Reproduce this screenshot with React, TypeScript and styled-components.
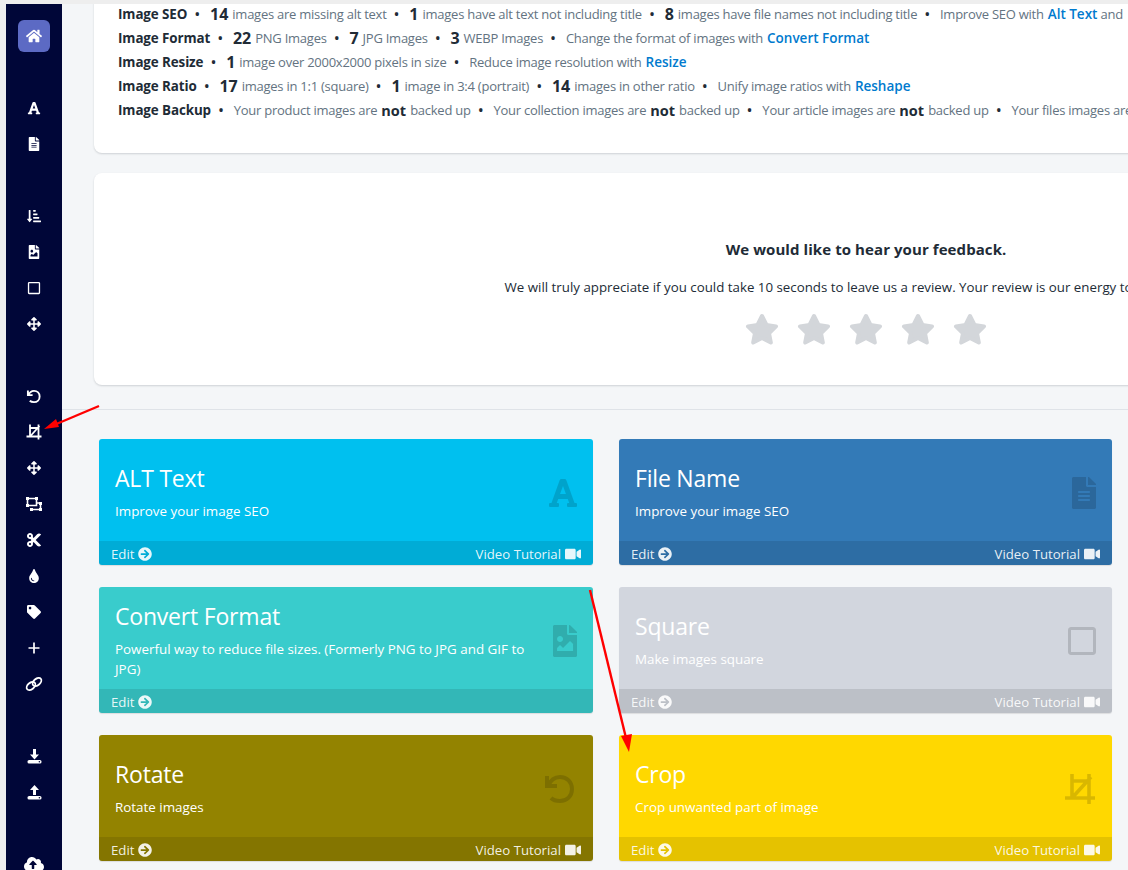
import { ReactNode } from 'react';
import styled, { createGlobalStyle } from 'styled-components';
import {
  FaArrowCircleRight,
  FaArrowsAlt,
  FaCloudUploadAlt,
  FaCut,
  FaFileAlt,
  FaFileImage,
  FaFont,
  FaHome,
  FaRegSquare,
  FaSortAmountDownAlt,
  FaTag,
  FaTint,
  FaVideo,
} from 'react-icons/fa';

const GlobalStyle = createGlobalStyle`
  html, body {
    margin: 0;
    padding: 0;
    background: #eeeeee;
    font-family: "Open Sans", "Liberation Sans", sans-serif;
    color: #212b36;
  }
`;

const Page = styled.div`
  position: relative;
  display: flex;
  width: 1128px;
  height: 870px;
  padding: 4px 0 0 6px;
  box-sizing: border-box;
  overflow: hidden;
`;

const Sidebar = styled.nav`
  flex: 0 0 56px;
  display: flex;
  flex-direction: column;
  align-items: center;
  gap: 36px;
  padding-top: 14px;
  background: #000638;
`;

const SideGroup = styled.div`
  display: flex;
  flex-direction: column;
  align-items: center;
`;

const SideItem = styled.div`
  display: flex;
  align-items: center;
  justify-content: center;
  width: 36px;
  height: 36px;
  color: #fff;
  font-size: 14px;
`;

const HomeButton = styled.div`
  display: flex;
  align-items: center;
  justify-content: center;
  width: 32px;
  height: 32px;
  border-radius: 6px;
  background: #5c6ac4;
  color: #fff;
  font-size: 16px;
`;

const Main = styled.main`
  flex: 1;
  min-width: 0;
  overflow: hidden;
  background: #f4f6f8;
`;

const Panel = styled.section`
  width: 1544px;
  margin-left: 32px;
  background: #fff;
  border-radius: 0 0 8px 8px;
  box-shadow: 0 1px 2px rgba(33, 43, 54, 0.18);
`;

const InfoPanel = styled(Panel)`
  height: 151px;
  margin-top: -2px;
  padding: 0 24px;
  box-sizing: border-box;
`;

const InfoRow = styled.div`
  height: 24px;
  display: flex;
  align-items: center;
  white-space: pre;
  font-size: 13px;
  letter-spacing: -0.25px;
  color: #637381;
`;

const Label = styled.b`
  font-size: 13.4px;
  font-weight: 700;
  letter-spacing: -0.1px;
  color: #212b36;
`;

const Num = styled.b`
  font-size: 16px;
  font-weight: 700;
  letter-spacing: 0;
  color: #212b36;
  margin-right: 4px;
`;

const Strong = styled.b`
  margin: 0 4px;
  font-size: 14.5px;
  font-weight: 700;
  letter-spacing: 0;
  color: #212b36;
`;

const Dot = styled.span`
  margin: 0 10px 0 7px;
  color: #212b36;
  font-size: 16px;
  line-height: 16px;
`;

const ToolLink = styled.a`
  margin-left: 4px;
  font-size: 13.5px;
  font-weight: 600;
  letter-spacing: 0;
  color: #007ace;
`;

const FeedbackPanel = styled(Panel)`
  height: 212px;
  margin-top: 20px;
  border-radius: 8px;
  display: flex;
  flex-direction: column;
  align-items: center;
  padding-top: 66px;
  box-sizing: border-box;
`;

const FeedbackTitle = styled.h2`
  margin: 0;
  font-size: 15px;
  line-height: 20px;
  font-weight: 700;
  letter-spacing: 0.08px;
`;

const FeedbackText = styled.p`
  margin: 18px 0 0;
  font-size: 13.3px;
  line-height: 20px;
  white-space: nowrap;
`;

const Stars = styled.div`
  display: flex;
  gap: 18px;
  margin-top: 16px;
`;

const Divider = styled.hr`
  height: 1px;
  margin: 24px 0 29px;
  border: 0;
  background: #dfe3e8;
`;

const CardGrid = styled.div`
  display: grid;
  grid-template-columns: 494px 493px;
  grid-auto-rows: 126px;
  column-gap: 26px;
  row-gap: 22px;
  margin-left: 37px;
`;

const Card = styled.article<{ $bg: string }>`
  display: flex;
  flex-direction: column;
  border-radius: 3px;
  overflow: hidden;
  background: ${(p) => p.$bg};
  color: #fff;
  box-shadow: 0 1px 1px rgba(0, 0, 0, 0.1);
`;

const CardBody = styled.div`
  flex: 1;
  display: flex;
  align-items: center;
  justify-content: space-between;
  padding: 2px 16px 0;
`;

const CardText = styled.div`
  width: 416px;
`;

const CardTitle = styled.h3`
  margin: 0 0 6px;
  font-size: 23px;
  line-height: 33px;
  font-weight: 400;
  letter-spacing: -0.2px;
`;

const CardDesc = styled.p`
  margin: 0;
  font-size: 13.4px;
  line-height: 20px;
`;

const CardIcon = styled.div<{ $w: number }>`
  display: flex;
  margin-top: 4px;
  color: rgba(0, 0, 0, 0.15);

  svg {
    width: ${(p) => p.$w}px;
    height: 32px;
  }
`;

const CardFooter = styled.div`
  flex: 0 0 24px;
  box-sizing: border-box;
  display: flex;
  align-items: center;
  justify-content: space-between;
  padding: 1px 12px 0;
  background: rgba(0, 0, 0, 0.1);
  font-size: 13.2px;
  color: rgba(255, 255, 255, 0.9);
`;

const FooterLink = styled.span`
  display: flex;
  align-items: center;
  gap: 4px;
`;

const Overlay = styled.svg`
  position: absolute;
  inset: 0;
  pointer-events: none;
`;

const Star = () => (
  <svg width="34" height="32" viewBox="0 0 34 32">
    <polygon
      points="17,3 21.5,12 31,13.4 24,20.2 25.8,29.5 17,25 8.2,29.5 10,20.2 3,13.4 12.5,12"
      fill="#d3d6da"
      stroke="#d3d6da"
      strokeWidth="4"
      strokeLinejoin="round"
    />
  </svg>
);

const CropIcon = () => (
  <svg width="16" height="16" viewBox="0 0 32 32" fill="none" stroke="currentColor" strokeWidth="3.6">
    <path d="M1 25H31M8 1V25M8 8H25M25 1V31M27 4L8 25" />
  </svg>
);

const UndoIcon = () => (
  <svg width="16" height="15" viewBox="0 0 34 32" fill="none" stroke="currentColor" strokeWidth="4">
    <path d="M4 3V13H14M5 13C8 6 12 4 17 4C24 4 29 9 29 16C29 23 24 28 17 28C13 28 10 27 8 25" />
  </svg>
);

const ReshapeIcon = () => (
  <svg width="18" height="16" viewBox="0 0 18 16" fill="none" stroke="currentColor" strokeWidth="1.6">
    <path d="M2.5 2.5H11.5V9.5H2.5ZM6 13.5H15.5V7H11.5" />
    <path
      d="M1 1H4V4H1ZM10 1H13V4H10ZM1 8H4V11H1ZM14 6H17V9H14ZM14 12H17V15H14ZM5 12H8V15H5Z"
      fill="currentColor"
      stroke="none"
    />
  </svg>
);

const PlusIcon = () => (
  <svg width="12" height="12" viewBox="0 0 12 12" fill="none" stroke="currentColor" strokeWidth="1.7">
    <path d="M6 0.5V11.5M0.5 6H11.5" />
  </svg>
);

const LinkIcon = () => (
  <svg width="18" height="16" viewBox="0 0 18 16" fill="none" stroke="currentColor" strokeWidth="1.8">
    <ellipse cx="6" cy="10" rx="5" ry="3.2" transform="rotate(-40 6 10)" />
    <ellipse cx="12" cy="6" rx="5" ry="3.2" transform="rotate(-40 12 6)" />
  </svg>
);

const TrayIcon = ({ up }: { up?: boolean }) => (
  <svg width="15" height="15" viewBox="0 0 15 15" fill="currentColor">
    <path d={up ? 'M7.5 0L12 5H9V10H6V5H3Z' : 'M6 0H9V5.5H12L7.5 10.5L3 5.5H6Z'} />
    <rect x="0.5" y="11" width="14" height="3.6" rx="1.6" />
    <circle cx="12.4" cy="12.8" r="0.8" fill="#000638" />
  </svg>
);

const sideGroups: ReactNode[][] = [
  [<FaFont />, <FaFileAlt />],
  [<FaSortAmountDownAlt />, <FaFileImage />, <FaRegSquare />, <FaArrowsAlt />],
  [
    <UndoIcon />,
    <CropIcon />,
    <FaArrowsAlt />,
    <ReshapeIcon />,
    <FaCut size={16} />,
    <FaTint />,
    <FaTag />,
    <PlusIcon />,
    <LinkIcon />,
  ],
  [<TrayIcon />, <TrayIcon up />],
  [<FaCloudUploadAlt size={20} />],
];

type CardInfo = {
  title: string;
  desc: string;
  bg: string;
  icon: ReactNode;
  iconWidth: number;
  video?: boolean;
};

const cards: CardInfo[] = [
  { title: 'ALT Text', desc: 'Improve your image SEO', bg: '#00c0ef', icon: <FaFont />, iconWidth: 28, video: true },
  { title: 'File Name', desc: 'Improve your image SEO', bg: '#337ab7', icon: <FaFileAlt />, iconWidth: 24, video: true },
  {
    title: 'Convert Format',
    desc: 'Powerful way to reduce file sizes. (Formerly PNG to JPG and GIF to JPG)',
    bg: '#39cccc',
    icon: <FaFileImage />,
    iconWidth: 24,
  },
  { title: 'Square', desc: 'Make images square', bg: '#d2d6de', icon: <FaRegSquare />, iconWidth: 28, video: true },
  { title: 'Rotate', desc: 'Rotate images', bg: '#938300', icon: <UndoIcon />, iconWidth: 34, video: true },
  { title: 'Crop', desc: 'Crop unwanted part of image', bg: '#ffd800', icon: <CropIcon />, iconWidth: 32, video: true },
];

const App = () => (
  <>
    <GlobalStyle />
    <Page>
      <Sidebar>
        <SideGroup>
          <SideItem>
            <HomeButton>
              <FaHome />
            </HomeButton>
          </SideItem>
        </SideGroup>
        {sideGroups.map((group, i) => (
          <SideGroup key={i}>
            {group.map((icon, j) => (
              <SideItem key={j}>{icon}</SideItem>
            ))}
          </SideGroup>
        ))}
      </Sidebar>
      <Main>
        <InfoPanel>
          <InfoRow>
            <Label>Image SEO</Label>
            <Dot>•</Dot>
            <Num>14</Num>images are missing alt text
            <Dot>•</Dot>
            <Num>1</Num>images have alt text not including title
            <Dot>•</Dot>
            <Num>8</Num>images have file names not including title
            <Dot>•</Dot>
            Improve SEO with<ToolLink>Alt Text</ToolLink> and
          </InfoRow>
          <InfoRow>
            <Label>Image Format</Label>
            <Dot>•</Dot>
            <Num>22</Num>PNG Images
            <Dot>•</Dot>
            <Num>7</Num>JPG Images
            <Dot>•</Dot>
            <Num>3</Num>WEBP Images
            <Dot>•</Dot>
            Change the format of images with<ToolLink>Convert Format</ToolLink>
          </InfoRow>
          <InfoRow>
            <Label>Image Resize</Label>
            <Dot>•</Dot>
            <Num>1</Num>image over 2000x2000 pixels in size
            <Dot>•</Dot>
            Reduce image resolution with<ToolLink>Resize</ToolLink>
          </InfoRow>
          <InfoRow>
            <Label>Image Ratio</Label>
            <Dot>•</Dot>
            <Num>17</Num>images in 1:1 (square)
            <Dot>•</Dot>
            <Num>1</Num>image in 3:4 (portrait)
            <Dot>•</Dot>
            <Num>14</Num>images in other ratio
            <Dot>•</Dot>
            Unify image ratios with<ToolLink>Reshape</ToolLink>
          </InfoRow>
          <InfoRow>
            <Label>Image Backup</Label>
            <Dot>•</Dot>
            Your product images are<Strong>not</Strong>backed up
            <Dot>•</Dot>
            Your collection images are<Strong>not</Strong>backed up
            <Dot>•</Dot>
            Your article images are<Strong>not</Strong>backed up
            <Dot>•</Dot>
            Your files images are
          </InfoRow>
        </InfoPanel>
        <FeedbackPanel>
          <FeedbackTitle>We would like to hear your feedback.</FeedbackTitle>
          <FeedbackText>
            We will truly appreciate if you could take 10 seconds to leave us a review. Your review is our energy to improve more.
          </FeedbackText>
          <Stars>
            <Star />
            <Star />
            <Star />
            <Star />
            <Star />
          </Stars>
        </FeedbackPanel>
        <Divider />
        <CardGrid>
          {cards.map((card) => (
            <Card key={card.title} $bg={card.bg}>
              <CardBody>
                <CardText>
                  <CardTitle>{card.title}</CardTitle>
                  <CardDesc>{card.desc}</CardDesc>
                </CardText>
                <CardIcon $w={card.iconWidth}>{card.icon}</CardIcon>
              </CardBody>
              <CardFooter>
                <FooterLink>
                  Edit <FaArrowCircleRight size={14} />
                </FooterLink>
                {card.video && (
                  <FooterLink>
                    Video Tutorial <FaVideo size={16} />
                  </FooterLink>
                )}
              </CardFooter>
            </Card>
          ))}
        </CardGrid>
      </Main>
      <Overlay width="1128" height="870" viewBox="0 0 1128 870">
        <line x1="99" y1="406" x2="54" y2="425" stroke="#f00" strokeWidth="2.4" />
        <polygon points="44,429 56,419 59,427" fill="#f00" />
        <line x1="590" y1="590" x2="626" y2="738" stroke="#f00" strokeWidth="2.4" />
        <polygon points="629,752 621,736 632,734" fill="#f00" />
      </Overlay>
    </Page>
  </>
);

export default App;
